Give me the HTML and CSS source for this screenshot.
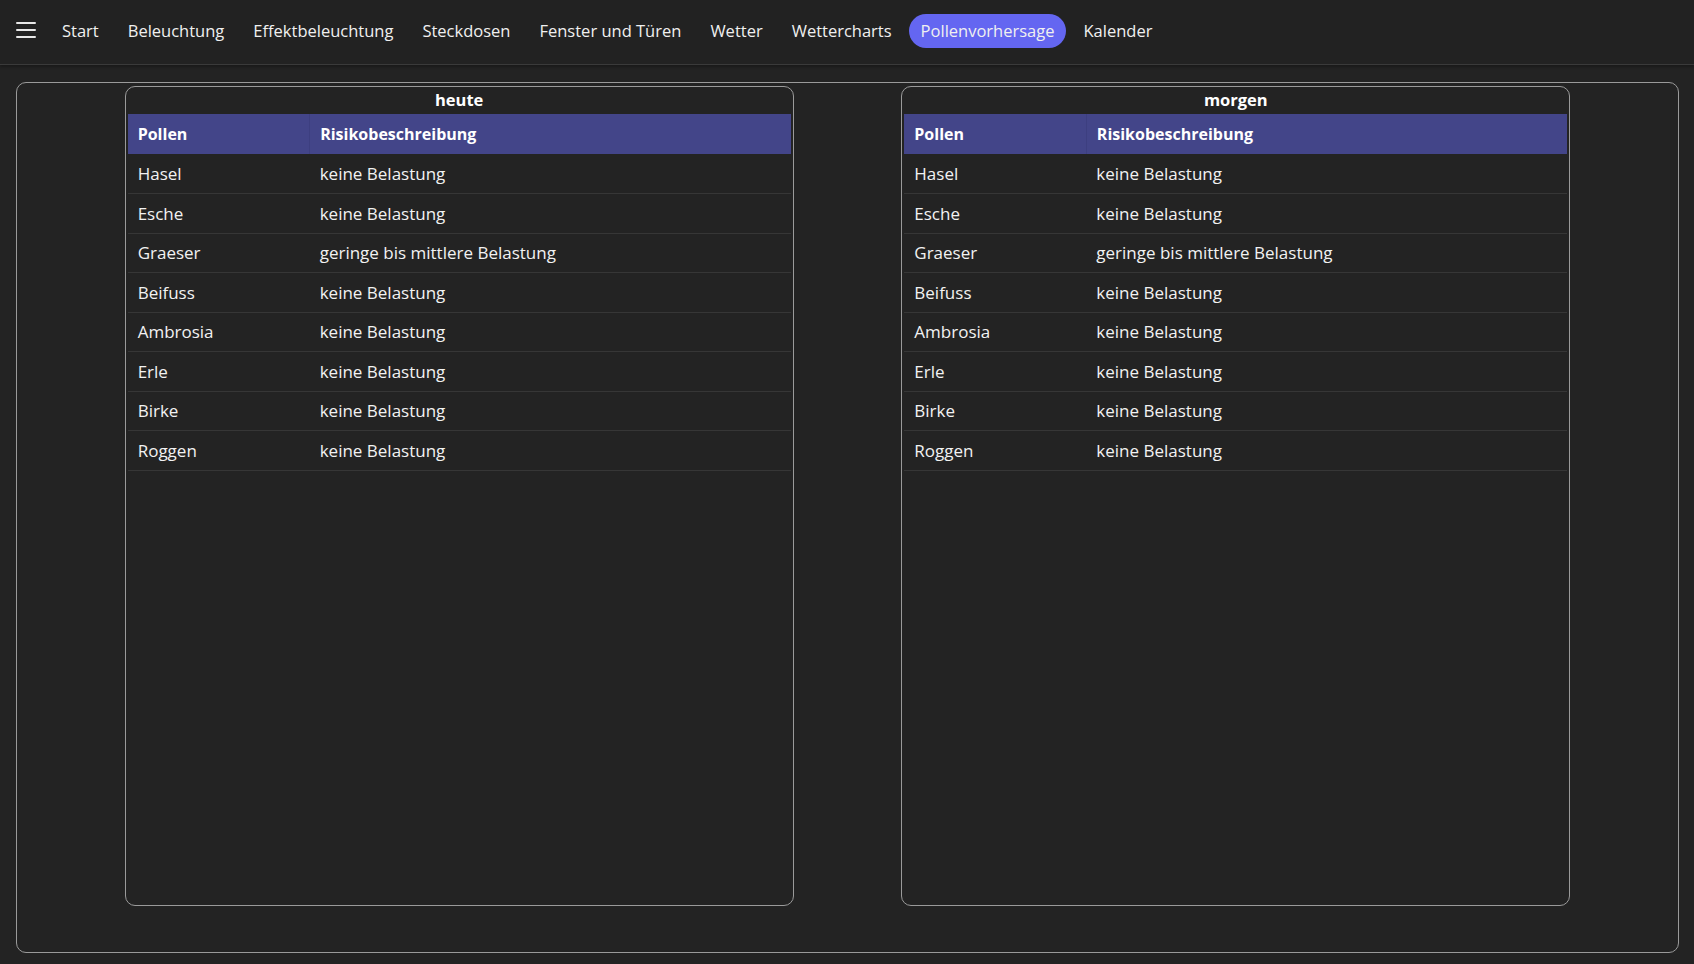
FILE: index.html
```html
<!DOCTYPE html>
<html lang="de">
<head>
  <meta charset="UTF-8" />
  <title>Pollenvorhersage</title>
  <link rel="stylesheet" href="styles.css">
</head>
<body>
  <div class="top-bar">
    <button class="menu-btn" aria-label="Menü">
      <svg width="20" height="18" viewBox="0 0 20 18">
        <path d="M1 2h18M1 9h18M1 16h18" stroke="#e8e8e8" stroke-width="2" stroke-linecap="round" />
      </svg>
    </button>
    <nav class="nav">
      <a class="nav-item">Start</a>
      <a class="nav-item">Beleuchtung</a>
      <a class="nav-item">Effektbeleuchtung</a>
      <a class="nav-item">Steckdosen</a>
      <a class="nav-item">Fenster und Türen</a>
      <a class="nav-item">Wetter</a>
      <a class="nav-item">Wettercharts</a>
      <a class="nav-item active">Pollenvorhersage</a>
      <a class="nav-item">Kalender</a>
    </nav>
  </div>

  <div class="content">
    <div class="panel">
      <div class="day-card">
        <div class="day-title">heute</div>
        <table class="pollen-table">
          <thead>
            <tr><th>Pollen</th><th>Risikobeschreibung</th></tr>
          </thead>
          <tbody>
            <tr><td>Hasel</td><td>keine Belastung</td></tr>
            <tr><td>Esche</td><td>keine Belastung</td></tr>
            <tr><td>Graeser</td><td>geringe bis mittlere Belastung</td></tr>
            <tr><td>Beifuss</td><td>keine Belastung</td></tr>
            <tr><td>Ambrosia</td><td>keine Belastung</td></tr>
            <tr><td>Erle</td><td>keine Belastung</td></tr>
            <tr><td>Birke</td><td>keine Belastung</td></tr>
            <tr><td>Roggen</td><td>keine Belastung</td></tr>
          </tbody>
        </table>
      </div>

      <div class="day-card">
        <div class="day-title">morgen</div>
        <table class="pollen-table">
          <thead>
            <tr><th>Pollen</th><th>Risikobeschreibung</th></tr>
          </thead>
          <tbody>
            <tr><td>Hasel</td><td>keine Belastung</td></tr>
            <tr><td>Esche</td><td>keine Belastung</td></tr>
            <tr><td>Graeser</td><td>geringe bis mittlere Belastung</td></tr>
            <tr><td>Beifuss</td><td>keine Belastung</td></tr>
            <tr><td>Ambrosia</td><td>keine Belastung</td></tr>
            <tr><td>Erle</td><td>keine Belastung</td></tr>
            <tr><td>Birke</td><td>keine Belastung</td></tr>
            <tr><td>Roggen</td><td>keine Belastung</td></tr>
          </tbody>
        </table>
      </div>
    </div>
  </div>
</body>
</html>
```

FILE: styles.css
```css
* {
  box-sizing: border-box;
  margin: 0;
  padding: 0;
}

body {
  font-family: 'Open Sans', 'Noto Sans', sans-serif;
  background: #232323;
  color: #f2f2f2;
  height: 100vh;
  display: flex;
  flex-direction: column;
}

.top-bar {
  height: 65px;
  display: flex;
  align-items: center;
  padding-left: 16px;
  background: #222222;
  border-bottom: 1px solid #3a3a3a;
  box-shadow: 0 2px 3px rgba(0, 0, 0, 0.3);
}

.menu-btn {
  background: none;
  border: none;
  width: 20px;
  height: 18px;
  display: flex;
  margin-right: 14px;
  margin-top: -4px;
}

.nav {
  display: flex;
  align-items: center;
  gap: 5px;
  margin-top: -3px;
}

.nav-item {
  font-size: 16.5px;
  color: #f0f0f0;
  padding: 6px 12px;
  border-radius: 17px;
  line-height: 22px;
}

.nav-item.active {
  background: #6466f1;
}

.content {
  flex: 1;
  padding: 17px 15px 11px 16px;
  display: flex;
}

.panel {
  flex: 1;
  border: 1px solid #9a9a9a;
  border-radius: 10px;
  display: flex;
  justify-content: space-evenly;
  padding: 3px 0 46px;
}

.day-card {
  width: 669px;
  border: 1px solid #9a9a9a;
  border-radius: 10px;
  padding: 0 2px;
}

.day-title {
  text-align: center;
  font-weight: 700;
  font-size: 16.5px;
  height: 27px;
  line-height: 25px;
  color: #ffffff;
}

.pollen-table {
  width: 100%;
  border-collapse: collapse;
  font-size: 17px;
}

.pollen-table th,
.pollen-table td {
  text-align: left;
  padding: 0 10px;
  height: 39.5px;
  border-bottom: 1px solid #363636;
}

.pollen-table th {
  background: #434589;
  color: #ffffff;
  font-weight: 700;
  font-size: 16px;
  height: 40px;
  border-bottom: none;
}

.pollen-table th + th {
  border-left: 1px solid #3d3f80;
}

.pollen-table th:first-child,
.pollen-table td:first-child {
  width: 182px;
}
```
